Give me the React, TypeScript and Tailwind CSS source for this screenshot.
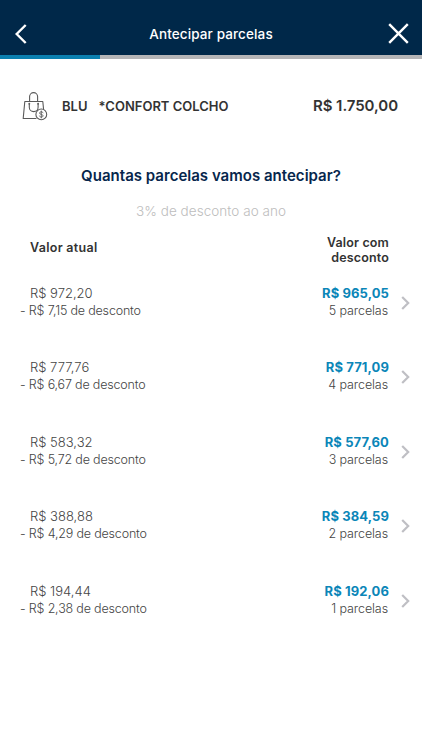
interface Installment {
  count: number;
  current: string;
  discount: string;
  total: string;
}

const installments: Installment[] = [
  { count: 5, current: "R$ 972,20", discount: "7,15", total: "R$ 965,05" },
  { count: 4, current: "R$ 777,76", discount: "6,67", total: "R$ 771,09" },
  { count: 3, current: "R$ 583,32", discount: "5,72", total: "R$ 577,60" },
  { count: 2, current: "R$ 388,88", discount: "4,29", total: "R$ 384,59" },
  { count: 1, current: "R$ 194,44", discount: "2,38", total: "R$ 192,06" },
];

function BagIcon() {
  return (
    <svg
      viewBox="0 0 26 30"
      className="h-[30px] w-[26px]"
      fill="none"
      stroke="#5a5a5a"
      strokeWidth="1.1"
      strokeLinecap="round"
      strokeLinejoin="round"
    >
      <path d="M14 26.5H1.2L2.8 9.5H20.8L21.6 17.5" />
      <path d="M7.6 9.3V4.6a4 4 0 0 1 8 0v4.7" />
      <path d="M7.3 12v3.2a4.4 4.4 0 0 0 8.8 0V12" />
      <circle cx="7.3" cy="11.8" r="0.4" />
      <circle cx="16.1" cy="11.8" r="0.4" />
      <circle cx="19.3" cy="22.4" r="5.4" fill="white" />
      <path
        d="M21 20.8c-.3-.7-.9-1-1.7-1-1 0-1.7.5-1.7 1.3 0 1.8 3.5.9 3.5 2.7 0 .8-.8 1.3-1.8 1.3-.9 0-1.6-.4-1.8-1.1M19.3 19v6.9"
        strokeWidth="0.9"
      />
    </svg>
  );
}

export default function App() {
  return (
    <div className="h-[750px] w-[422px] overflow-hidden bg-white font-['Inter',sans-serif] text-[#333333]">
      {/* Header */}
      <header className="flex h-[55px] items-center justify-between bg-[#002849] pt-3 pr-[13px] pl-[15px]">
        <button aria-label="Voltar" className="w-[19px]">
          <svg viewBox="0 0 12 20" className="h-5 w-3" fill="none" stroke="white" strokeWidth="2.4">
            <path d="M10.7 1L1.7 10L10.7 19" />
          </svg>
        </button>
        <h1 className="pt-px text-[13.5px] font-medium tracking-[0.12px] text-white">
          Antecipar parcelas
        </h1>
        <button aria-label="Fechar">
          <svg viewBox="0 0 21 21" className="size-[21px]" fill="none" stroke="white" strokeWidth="2.4">
            <path d="M1.2 1.2L19.8 19.8M19.8 1.2L1.2 19.8" />
          </svg>
        </button>
      </header>

      {/* Progress */}
      <div className="h-1 bg-[#b5b5b7]">
        <div className="h-full w-[100px] bg-[#0b80b0]" />
      </div>

      {/* Purchase */}
      <section className="flex h-[95px] items-center pr-6 pl-[22px]">
        <BagIcon />
        <span className="ml-3.5 text-[13px] font-semibold">BLU</span>
        <span className="ml-[11px] text-[13px] font-semibold">*CONFORT COLCHO</span>
        <span className="ml-auto text-[15px] font-semibold tracking-[-0.06px]">R$ 1.750,00</span>
      </section>

      <h2 className="mt-[11px] text-center text-[15px] leading-[22px] font-semibold tracking-[0.02px] text-[#06264c]">
        Quantas parcelas vamos antecipar?
      </h2>
      <p className="mt-[15px] text-center text-[13.5px] leading-[18px] font-light tracking-[0.05px] text-[#bdbdbd]">
        3% de desconto ao ano
      </p>

      <div className="mt-[15px] flex h-[32px] items-start justify-between pr-[33px] pl-[30px] text-[12.5px] leading-[15px] font-semibold tracking-[0.15px]">
        <span className="pt-[5px] tracking-[0.3px]">Valor atual</span>
        <span className="text-right">
          Valor com
          <br />
          desconto
        </span>
      </div>

      {/* Installment options */}
      <ul className="mt-[17.6px]">
        {installments.map((item) => (
          <li key={item.count} className="flex h-[74.6px] items-start pr-3 pl-5">
            <div className="font-light text-[#444444]">
              <div className="pl-2.5 text-[13px] leading-[17px]">{item.current}</div>
              <div className="text-[12.5px] leading-[17px] tracking-[-0.18px]">
                - R$ {item.discount} de desconto
              </div>
            </div>
            <div className="ml-auto text-right">
              <div className="text-[13px] leading-[17px] font-bold tracking-[0.1px] text-[#0b86b8]">
                {item.total}
              </div>
              <div className="pr-px text-[12.5px] leading-[17px] font-light tracking-[-0.1px] text-[#444444]">
                {item.count} parcelas
              </div>
            </div>
            <svg
              viewBox="0 0 9 14"
              className="mt-[11px] ml-3 h-3.5 w-[9px]"
              fill="none"
              stroke="#bfbfc4"
              strokeWidth="2.2"
            >
              <path d="M1.2 1L7.2 7L1.2 13" />
            </svg>
          </li>
        ))}
      </ul>
    </div>
  );
}
